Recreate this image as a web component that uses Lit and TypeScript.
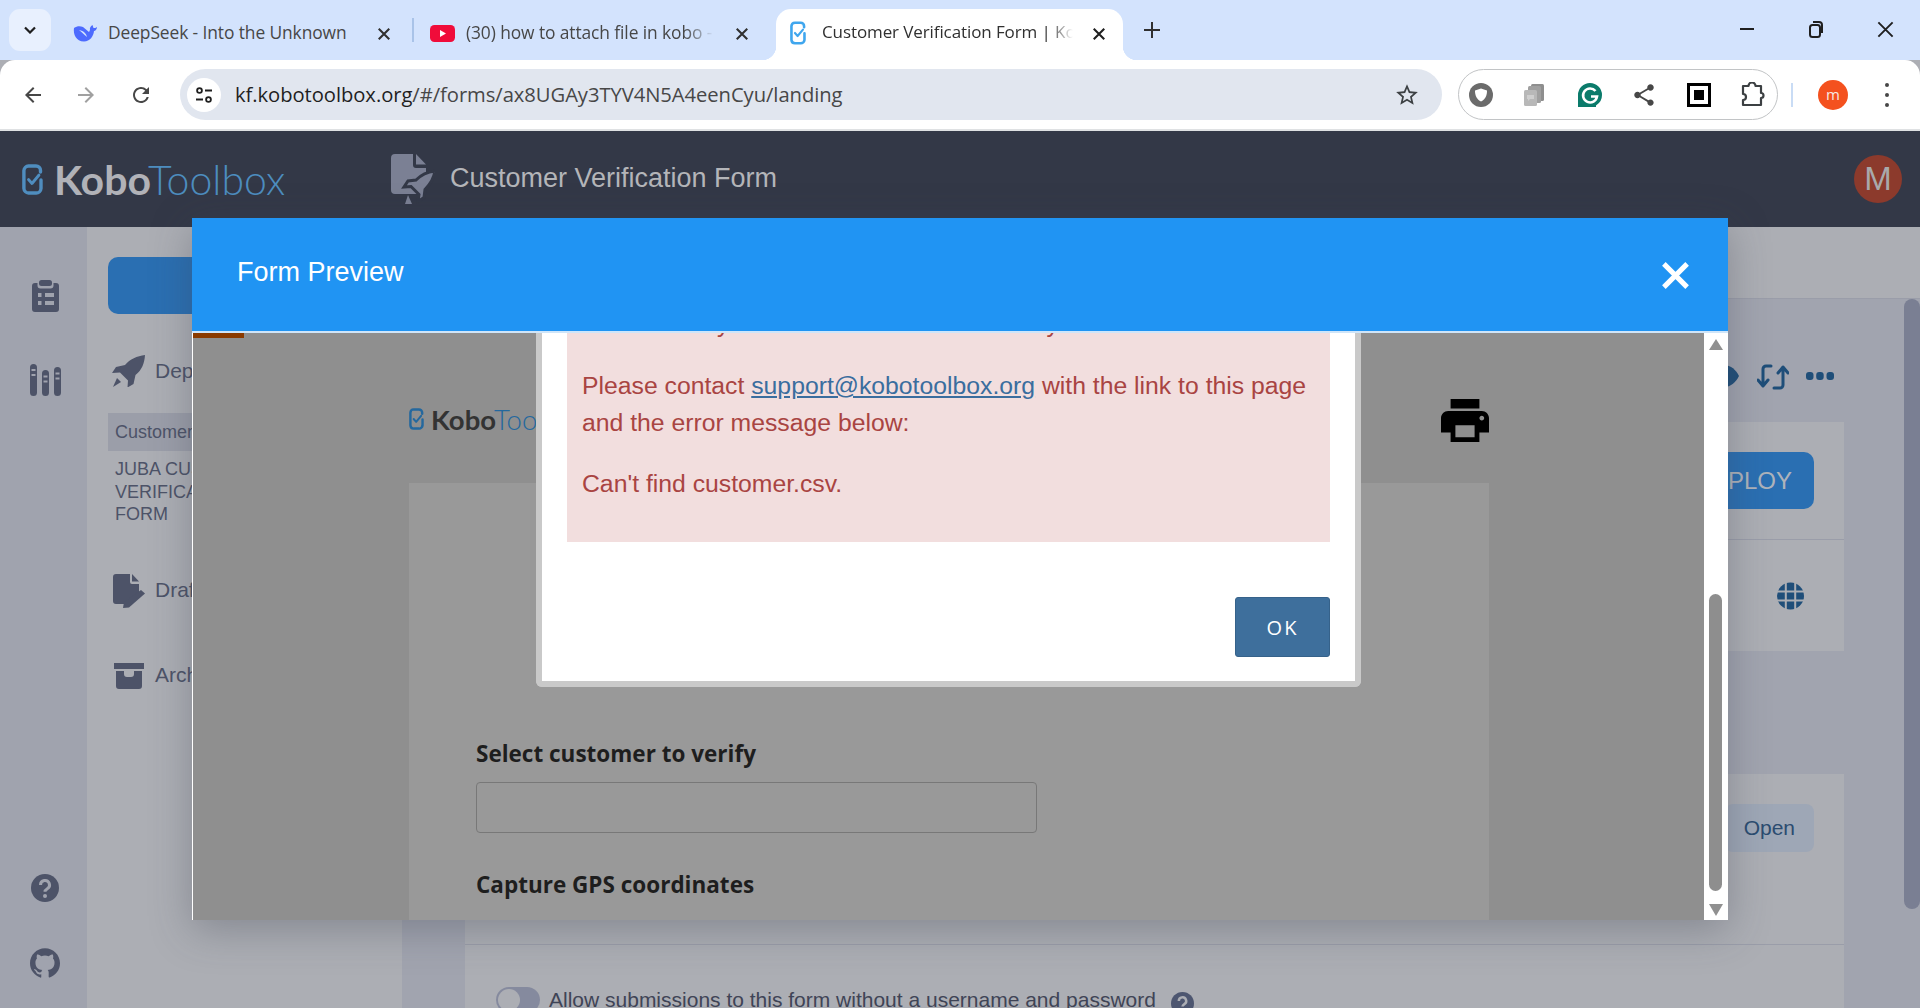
import { LitElement, html, css } from "lit";
import { customElement } from "lit/decorators.js";

const P = (d: string, vb = "0 0 24 24", cls = "") => html`<svg class=${cls} viewBox=${vb} fill="currentColor"><path d=${d} fill-rule="evenodd"></path></svg>`;

const markIcon = (cls: string) => html`<svg class=${cls} viewBox="0 0 21 31" fill="none" stroke="currentColor" stroke-width="3.400" stroke-linecap="round" stroke-linejoin="round">
  <path d="M18.500 8V6.500A4.500 4.500 0 0 0 14 2H6.500A4.800 4.800 0 0 0 1.900 6.500v18A4.800 4.800 0 0 0 6.500 29H14a4.800 4.800 0 0 0 5-4.500V16"></path>
  <path d="M6.500 15.500l3.500 4 7-8.500" stroke-width="2.800"></path></svg>`;

const logo = (cls: string) => html`<div class="logo ${cls}">${markIcon("mark")}<span class="kobo">Kobo</span><span class="tool">Toolbox</span></div>`;

const xIcon = (cls: string, w = 2.4) => html`<svg class=${cls} viewBox="0 0 16 16" fill="none" stroke="currentColor" stroke-width=${w}><path d="M2 2l12 12M14 2L2 14"></path></svg>`;

@customElement("app-root")
export class AppRoot extends LitElement {
  static styles = css`
    :host { display: block; width: 1920px; height: 1008px; overflow: hidden; position: relative; font-family: "Liberation Sans", Arial, sans-serif; background: #acaeb4; }
    * { box-sizing: border-box; }
    svg { display: block; flex: none; }

    /* tab strip */
    .strip { height: 60px; background: #d3e3fd; display: flex; align-items: flex-start; font-family: "Open Sans", "Noto Sans", sans-serif; color: #474747; }
    .expander { width: 42px; height: 42px; margin: 9px 0 0 9px; border-radius: 11px; background: #e8f0fe; display: flex; align-items: center; justify-content: center; color: #1f1f1f; }
    .expander svg { width: 12px; height: 8px; }
    .tab { height: 51px; margin-top: 9px; display: flex; align-items: center; position: relative; font-size: 17.4px; letter-spacing: -0.1px; }
    .tab .title { flex: 1; white-space: nowrap; overflow: hidden; min-width: 0; margin-top: -6px; }
    .tab .close { width: 14px; height: 14px; color: #303030; flex: none; margin-top: -1px; }
    .tab1 { width: 361px; padding-left: 22px; }
    .tab1 .fav { width: 24px; height: 17px; margin-right: 11px; margin-top: -3px; }
    .tab1 .close { margin: -1px 21px 0 19px; }
    .sep { width: 2px; height: 24px; background: #a9c3e8; margin-top: 18px; }
    .tab2 { width: 362px; padding-left: 16px; }
    .tab2 .fav { width: 25px; height: 17px; margin-right: 11px; margin-top: -2px; }
    .tab2 .title { -webkit-mask-image: linear-gradient(90deg, #000 88%, transparent 100%); mask-image: linear-gradient(90deg, #000 88%, transparent 100%); }
    .tab2 .close { margin: -1px 27px 0 21px; }
    .tab3 { width: 347px; padding-left: 14px; background: #fff; border-radius: 15px 15px 0 0; color: #303030; font-size: 17px; }
    .tab3::before, .tab3::after { content: ""; position: absolute; bottom: 0; width: 14px; height: 14px; }
    .tab3::before { left: -14px; background: radial-gradient(circle at 0 0, transparent 14px, #fff 14.5px); }
    .tab3::after { right: -14px; background: radial-gradient(circle at 100% 0, transparent 14px, #fff 14.5px); }
    .tab3 .fav { width: 16px; height: 24px; margin-right: 16px; margin-top: -3px; color: #3fa6ee; }
    .tab3 .title { -webkit-mask-image: linear-gradient(90deg, #000 90%, transparent 100%); mask-image: linear-gradient(90deg, #000 90%, transparent 100%); }
    .tab3 .close { margin: -1px 17px 0 19px; color: #1f1f1f; }
    .plus { width: 20px; height: 20px; margin: 20px 0 0 19px; color: #303030; }
    .win { margin-left: auto; display: flex; height: 58px; color: #1f1f1f; }
    .win div { width: 69px; display: flex; align-items: center; justify-content: center; }
    .win div:last-child { width: 70px; }
    .win .x { width: 19px; height: 19px; }
    .win .min { width: 14px; height: 2px; background: #1f1f1f; }
    .win .rest { width: 16px; height: 18px; }

    /* toolbar */
    .toolbar { height: 69px; padding: 9px 0 9px 6px; background: #fff; border-radius: 15px 15px 0 0; display: flex; align-items: center; color: #474747; }
    .nav { height: 51px; display: flex; align-items: center; justify-content: center; }
    .nav svg { width: 24px; height: 24px; }
    .w53 { width: 53px; } .w57 { width: 57px; }
    .nav.off { color: #a0a0a0; }
    .omni { width: 1262px; height: 51px; margin-left: 11px; background: #e1e6ef; border-radius: 26px; display: flex; align-items: center; padding-left: 7px; font-family: "Open Sans", "Noto Sans", sans-serif; }
    .tune { width: 34px; height: 34px; border-radius: 50%; background: #fff; display: flex; align-items: center; justify-content: center; color: #1f1f1f; }
    .tune svg { width: 20px; height: 20px; }
    .url { margin-left: 14px; font-size: 20.2px; letter-spacing: -0.05px; color: #1f1f1f; white-space: nowrap; margin-top: -2px; }
    .url span { color: #474747; }
    .star { margin-left: auto; margin-right: 22px; width: 26px; height: 26px; color: #3c4043; }
    .pill { width: 320px; height: 51px; margin-left: 16px; border: 1px solid #c2c4c6; border-radius: 26px; display: flex; align-items: center; padding-left: 9px; gap: 28.4px; }
    .pill svg { width: 26px; height: 26px; }
    .share { color: #474747; }
    .tsep { width: 2px; height: 24px; background: #c9dcf5; margin-left: 13px; }
    .avatar { width: 30px; height: 30px; border-radius: 50%; background: #f4511e; color: #f6e9e2; margin-left: 25px; display: flex; align-items: center; justify-content: center; font: 15px "Open Sans", sans-serif; padding-bottom: 2px; }
    .kebab { margin-left: 37px; display: flex; flex-direction: column; gap: 6px; }
    .kebab i { width: 4px; height: 4px; border-radius: 50%; background: #474747; display: block; }
    .tline { height: 2px; background: #dfe1e3; }

    /* kobo header */
    .khead { height: 96px; background: #333847; display: flex; align-items: center; position: relative; }
    .logo { display: flex; align-items: center; }
    .logo .kobo, .logo .tool { font-family: Lato, sans-serif; white-space: nowrap; }
    .big { width: 369px; margin-left: 22px; }
    .big .mark { width: 21px; height: 31px; color: #4f8dbf; margin-right: 11px; }
    .big .kobo { font-size: 41px; font-weight: 700; color: #b1b2b8; }
    .big .tool { font-size: 41px; font-weight: 300; color: #4d8dbf; margin-left: -3px; }
    .formicon { width: 44px; height: 50px; color: #7b8094; margin-right: 15px; }
    .ktitle { font-size: 27px; color: #b4b5b9; margin-top: -1px; }
    .kav { margin-left: auto; margin-right: 18px; width: 48px; height: 48px; border-radius: 50%; background: #8c3a2c; color: #a9a9ab; display: flex; align-items: center; justify-content: center; font-size: 33px; }

    /* page body */
    .pbody { height: 781px; display: flex; color: #4d5368; overflow: hidden; }
    .rail { width: 87px; background: #a0a3ae; display: flex; flex-direction: column; align-items: center; padding: 53px 0 30px 3px; }
    .rail .i1 { width: 27px; height: 32px; }
    .rail .i2 { width: 31px; height: 32px; margin-top: 52px; }
    .rail .i3 { width: 28px; height: 28px; margin-top: auto; }
    .rail .i4 { width: 30px; height: 30px; margin-top: 46px; }
    .side { width: 315px; background: #acaeb4; padding: 30px 0 0 21px; position: relative; }
    .newbtn { width: 270px; height: 57px; background: #2a6fb2; border-radius: 10px; }
    .srow { display: flex; align-items: center; padding-left: 4px; font-size: 21px; }
    .srow .lab { position: absolute; left: 68px; }
    .srow svg { color: #4d5368; }
    .r1 { margin-top: 41px; height: 32px; } .r1 svg { width: 33px; height: 32px; }
    .sel { margin-top: 26px; height: 38px; width: 270px; background: #9b9ea9; padding-left: 7px; display: flex; align-items: center; font-size: 18px; }
    .sub { margin: 7px 0 0 7px; font-size: 18px; line-height: 22.5px; }
    .r2 { margin-top: 48px; height: 34px; padding-left: 5px; } .r2 svg { width: 32px; height: 34px; }
    .r2 .lab, .r3 .lab { margin-top: -2px; }
    .r3 { margin-top: 55px; height: 26px; padding-left: 6px; } .r3 svg { width: 30px; height: 26px; }

    .mainc { flex: 1; min-width: 0; display: flex; flex-direction: column; }
    .band { height: 72px; border-bottom: 1px solid #9a9da9; flex: none; background: #acaeb4; }
    .mrow { flex: 1; display: flex; min-height: 0; background: #a1a4af; }
    .content { flex: 1; padding: 0 60px 0 63px; min-width: 0; }
    .pbar { width: 16px; height: 610px; background: #7a7f93; border-radius: 8px; flex: none; }
    .acts { height: 46px; margin-top: 54px; display: flex; justify-content: flex-end; align-items: center; gap: 18px; padding-right: 10px; color: #1f4e79; }
    .acts .eye { width: 30px; height: 22px; }
    .acts .sync { width: 32px; height: 27px; margin-right: -1px; }
    .acts .dots { width: 28px; height: 8px; }
    .card { background: #acaeb4; }
    .c1 { margin-top: 23px; height: 229px; }
    .c1a { height: 118px; border-bottom: 1px solid #9a9da9; display: flex; justify-content: flex-end; padding: 30px 30px 0 0; }
    .deploy { height: 57px; padding: 0 22px; border-radius: 10px; background: #2a6fb2; color: #aeb3bb; font-size: 24px; display: flex; align-items: center; }
    .c1b { height: 111px; display: flex; justify-content: flex-end; align-items: center; padding-right: 40px; color: #1f4e79; }
    .c1b svg { width: 27px; height: 28px; }
    .c2 { margin-top: 123px; height: 171px; border-bottom: 1px solid #9a9da9; display: flex; justify-content: flex-end; padding: 30px 30px 0 0; }
    .open { height: 48px; padding: 0 19px; border-radius: 8px; background: #9ea7b6; color: #2b4c70; font-size: 21px; display: flex; align-items: center; }
    .c3 { height: 70px; padding: 42px 0 0 31px; display: flex; align-items: flex-start; font-size: 21px; color: #3f4456; white-space: nowrap; }
    .toggle { width: 44px; height: 26px; border-radius: 13px; background: #858a9e; margin-right: 9px; position: relative; flex: none; }
    .toggle::before { content: ""; position: absolute; left: 2px; top: 2px; width: 22px; height: 22px; border-radius: 50%; background: #acaeb4; }
    .c3 .help { width: 23px; height: 23px; margin: 5px 0 0 15px; color: #4d5670; }
    .c3 .allow { margin-top: 1px; }

    /* modal */
    .modal { position: absolute; left: 192px; top: 218px; width: 1536px; height: 702px; display: flex; flex-direction: column; box-shadow: 0 10px 40px rgba(60,65,80,.35); background: #fff; border-radius: 3px 3px 0 0; }
    .mhead { height: 113px; flex: none; background: #2094f3; color: #fff; display: flex; align-items: center; justify-content: space-between; padding: 0 37px 5px 45px; font-size: 27px; }
    .mx { width: 31px; height: 31px; margin-top: 6px; }
    .mline { height: 2px; background: #cfe5f9; flex: none; }
    .mbody { flex: 1; display: flex; min-height: 0; padding-left: 1px; }
    .frame { width: 1511px; flex: none; background: #8f8f8f; position: relative; overflow: hidden; }
    .brown { position: absolute; left: 0; top: 0; width: 51px; height: 5px; background: #8a3a00; }
    .fhead { height: 150px; display: flex; justify-content: space-between; margin: 0 215px 0 216px; padding-top: 64px; }
    .small { height: 44px; }
    .small .mark { width: 15px; height: 22px; color: #24689e; margin-right: 7px; }
    .small .kobo { font-size: 27.5px; font-weight: 700; color: #333; }
    .small .tool { font-size: 27.5px; font-weight: 300; color: #24689e; margin-left: -2px; }
    .printer { width: 48px; height: 45px; color: #000; margin-top: 1px; }
    .sheet { height: 437px; margin: 0 215px 0 216px; background: #999; padding: 256px 0 0 67px; font-family: "Open Sans", "Noto Sans", sans-serif; color: #1e1e1e; }
    .q { font-size: 22.5px; font-weight: 700; line-height: 30px; }
    .inp { width: 561px; height: 51px; border: 1px solid #787878; border-radius: 4px; margin: 13px 0 37px; }
    .dialog { position: absolute; left: 343px; bottom: 233px; width: 825px; background: #fff; border: 6px solid #c9c9c9; border-top: 0; border-radius: 0 0 6px 6px; padding: 0 25px 24px 25px; }
    .alert { background: #f2dede; color: #a94442; padding: 0 15px 16px; font-size: 24.75px; line-height: 37px; }
    .alert p { margin: 0 0 24px; }
    .alert .tails { display: flex; padding-left: 135px; gap: 317px; height: 37px; margin-bottom: 25px; }
    .alert a { color: #3a6d9e; text-decoration: underline; }
    .okrow { display: flex; justify-content: flex-end; margin-top: 55px; }
    .ok { width: 95px; height: 60px; background: #3e6f9c; border: 1px solid #36628a; border-radius: 3px; color: #fff; font: 20px "Open Sans", sans-serif; letter-spacing: 2px; display: flex; align-items: center; justify-content: center; }
    .msb { flex: 1; background: #fff; position: relative; }
    .up, .down { position: absolute; left: 5px; width: 0; height: 0; border-left: 7px solid transparent; border-right: 7px solid transparent; }
    .up { top: 6px; border-bottom: 11px solid #909090; }
    .down { bottom: 4px; border-top: 12px solid #909090; }
    .thumb { position: absolute; left: 5px; top: 261px; width: 13px; height: 297px; background: #8e8e8e; border-radius: 7px; }
  `;

  render() {
    return html`
      <div class="strip">
        <div class="expander"><svg viewBox="0 0 12 8" fill="none" stroke="currentColor" stroke-width="2.200"><path d="M1 1.500l5 5 5-5"></path></svg></div>
        <div class="tab tab1">
          <svg class="fav" viewBox="0 0 24 17"><path fill="#4d6bfe" fill-rule="evenodd" d="M1 3C0 9 3 16.500 11 16.500c6 0 9.500-5.500 10-10.500 1.500 0 3-2 3-4-1 1-2.500 1-3.500 1L19.500 0c-2 1-3 3-2.500 5-.5 1-.5 1-1 2L10 2C7 1 4 1 1 3zM6 5c3 2 5 5 8 7-.5-3-3-6-8-7z"></path></svg>
          <span class="title">DeepSeek - Into the Unknown</span>
          ${xIcon("close")}
        </div>
        <div class="sep"></div>
        <div class="tab tab2">
          <svg class="fav" viewBox="0 0 25 17"><rect width="25" height="17" rx="4.500" fill="#f00c3a"></rect><path d="M10 5l6 3.500-6 3.500z" fill="#fff"></path></svg>
          <span class="title">(30) how to attach file in kobo - YouTube</span>
          ${xIcon("close")}
        </div>
        <div class="tab tab3">
          ${markIcon("fav")}
          <span class="title">Customer Verification Form | KoboToolbox</span>
          ${xIcon("close")}
        </div>
        <svg class="plus" viewBox="0 0 20 20" fill="none" stroke="currentColor" stroke-width="2"><path d="M10 2v16M2 10h16"></path></svg>
        <div class="win">
          <div><span class="min"></span></div>
          <div><svg class="rest" viewBox="0 0 16 18" fill="none" stroke="currentColor" stroke-width="2"><rect x="2" y="5" width="10" height="12" rx="2.500"></rect><path d="M5 2h6a3 3 0 0 1 3 3v8"></path></svg></div>
          <div>${xIcon("x", 1.6)}</div>
        </div>
      </div>

      <div class="toolbar">
        <div class="nav w53">${P("M20 11H7.830l5.590-5.590L12 4l-8 8 8 8 1.410-1.410L7.830 13H20v-2z")}</div>
        <div class="nav w53 off">${P("M4 11h12.170l-5.590-5.590L12 4l8 8-8 8-1.410-1.410L16.170 13H4v-2z")}</div>
        <div class="nav w57">${P("M17.650 6.350A7.958 7.958 0 0 0 12 4c-4.420 0-7.990 3.580-7.990 8s3.570 8 7.990 8c3.730 0 6.840-2.550 7.730-6h-2.080A5.990 5.990 0 0 1 12 18c-3.310 0-6-2.690-6-6s2.690-6 6-6c1.660 0 3.140.690 4.220 1.780L13 11h7V4l-2.350 2.350z")}</div>
        <div class="omni">
          <div class="tune"><svg viewBox="0 0 20 20" fill="none" stroke="currentColor" stroke-width="1.800"><circle cx="5.500" cy="5.500" r="2.400"></circle><path d="M11 5.500h7M2 14.500h7"></path><circle cx="14.500" cy="14.500" r="2.400"></circle></svg></div>
          <div class="url">kf.kobotoolbox.org<span>/#/forms/ax8UGAy3TYV4N5A4eenCyu/landing</span></div>
          ${P("M22 9.240l-7.190-.620L12 2 9.190 8.630 2 9.240l5.460 4.730L5.820 21 12 17.270 18.180 21l-1.630-7.030L22 9.240zM12 15.400l-3.760 2.270 1-4.280-3.320-2.880 4.380-.380L12 6.100l1.710 4.040 4.380.380-3.320 2.880 1 4.280L12 15.400z", "0 0 24 24", "star")}
        </div>
        <div class="pill">
          <svg viewBox="0 0 26 26"><circle cx="13" cy="13" r="12" fill="#6b6b6b"></circle><path d="M13 6.500l6 2c.2 5-2 9-6 11-4-2-6.200-6-6-11z" fill="#fff"></path></svg>
          <svg viewBox="0 0 26 26"><rect x="9" y="2" width="13" height="17" rx="1.500" fill="#8e8e8e"></rect><rect x="6" y="4" width="13" height="17" rx="1.500" fill="#a0a0a0"></rect><rect x="2" y="8" width="13" height="16" rx="1.500" fill="#b8b8b8"></rect><path d="M5 13h7v4H8l-2 2v-2H5z" fill="#cfcfcf"></path></svg>
          <svg viewBox="0 0 26 26"><path d="M13 1a12 12 0 0 1 12 12 12 12 0 0 1-6 10.400V25H1v-12A12 12 0 0 1 13 1z" fill="#0b7b6b"></path><path d="M18.500 9A7 7 0 1 0 20 14.500h-6" fill="none" stroke="#fff" stroke-width="2.600"></path></svg>
          ${P("M18 16.080c-.760 0-1.440.300-1.960.770L8.910 12.700c.050-.230.090-.460.090-.700s-.040-.470-.090-.700l7.050-4.110c.540.500 1.250.810 2.040.810 1.660 0 3-1.340 3-3s-1.340-3-3-3-3 1.340-3 3c0 .240.040.470.090.700L8.040 9.810C7.500 9.310 6.790 9 6 9c-1.660 0-3 1.340-3 3s1.340 3 3 3c.790 0 1.500-.310 2.040-.810l7.120 4.160c-.050.210-.080.430-.080.650 0 1.610 1.310 2.920 2.920 2.920s2.920-1.310 2.920-2.920-1.310-2.920-2.920-2.920z", "0 0 24 24", "share")}
          <svg viewBox="0 0 26 26"><rect x="1" y="1" width="24" height="24" fill="#000"></rect><rect x="4" y="4" width="18" height="18" fill="#fff"></rect><rect x="8" y="8" width="10" height="10" fill="#000"></rect></svg>
          <svg viewBox="0 0 26 26" fill="none" stroke="#3c4043" stroke-width="2.200" stroke-linejoin="round"><path d="M3 5h5.500a3.500 3.500 0 0 1 7 0H21v7a2.500 2.500 0 0 1 0 5v7H3v-5a3 3 0 0 0 0-6z" transform="translate(0 -1)"></path></svg>
        </div>
        <div class="tsep"></div>
        <div class="avatar">m</div>
        <div class="kebab"><i></i><i></i><i></i></div>
      </div>
      <div class="tline"></div>

      <div class="khead">
        ${logo("big")}
        <svg class="formicon" viewBox="0 0 44 50"><path fill="currentColor" d="M4 0h18v11a3 3 0 0 0 3 3h10v26H4a4 4 0 0 1-4-4V4a4 4 0 0 1 4-4z"></path><path fill="currentColor" d="M25 0l10 10.500H25z"></path><path fill="currentColor" stroke="#333847" stroke-width="3" d="M44 17c-8 1-14 4-19 9l-8 1-4 6 7-.5 8 8-1 7 6-4 1-8c5-5 9-11 10-19z"></path><path fill="currentColor" d="M17 41l-3 9h7z"></path></svg>
        <div class="ktitle">Customer Verification Form</div>
        <div class="kav">M</div>
      </div>

      <div class="pbody">
        <div class="rail">
          <svg class="i1" viewBox="0 0 27 32" fill="currentColor"><rect x="7" y="0" width="13" height="6" rx="2.500"></rect><path fill-rule="evenodd" d="M3 3h2.500v2.500a3 3 0 0 0 3 3h10a3 3 0 0 0 3-3V3H24a3 3 0 0 1 3 3v23a3 3 0 0 1-3 3H3a3 3 0 0 1-3-3V6a3 3 0 0 1 3-3zM6 13v4h3.500v-4zm7 0v4h9v-4zM6 21v4h3.500v-4zm7 0v4h9v-4z"></path></svg>
          <svg class="i2" viewBox="0 0 31 32" fill="currentColor" fill-rule="evenodd"><path d="M3.500 0A3.500 3.500 0 0 1 7 3.500V28.500a3.500 3.500 0 0 1-7 0V3.500A3.500 3.500 0 0 1 3.500 0zM1.500 5v2h4V5zM1.500 10v2h4v-2z"></path><path d="M15.500 6A3.500 3.500 0 0 1 19 9.500v19a3.500 3.500 0 0 1-7 0v-19A3.500 3.500 0 0 1 15.500 6zM13.500 11.500v2h4v-2zM13.500 16.500v2h4v-2z"></path><path d="M27.500 3A3.500 3.500 0 0 1 31 6.500v22a3.500 3.500 0 0 1-7 0v-22A3.500 3.500 0 0 1 27.500 3zM25.500 8.500v2h4v-2zM25.500 13.500v2h4v-2z"></path></svg>
          <svg class="i3" viewBox="0 0 28 28"><circle cx="14" cy="14" r="14" fill="currentColor"></circle><path d="M9.500 11a4.500 4.500 0 1 1 6.800 3.800c-1.400.9-2.300 1.500-2.300 3" fill="none" stroke="#a0a3ae" stroke-width="3"></path><circle cx="14" cy="22" r="2" fill="#a0a3ae"></circle></svg>
          ${P("M12 .297c-6.630 0-12 5.373-12 12 0 5.303 3.438 9.800 8.205 11.385.600.113.820-.258.820-.577 0-.285-.010-1.040-.015-2.040-3.338.724-4.042-1.610-4.042-1.610C4.422 18.070 3.633 17.700 3.633 17.700c-1.087-.744.084-.729.084-.729 1.205.084 1.838 1.236 1.838 1.236 1.070 1.835 2.809 1.305 3.495.998.108-.776.417-1.305.760-1.605-2.665-.300-5.466-1.332-5.466-5.930 0-1.310.465-2.380 1.235-3.220-.135-.303-.540-1.523.105-3.176 0 0 1.005-.322 3.300 1.230.960-.267 1.980-.399 3-.405 1.020.006 2.040.138 3 .405 2.280-1.552 3.285-1.230 3.285-1.230.645 1.653.240 2.873.120 3.176.765.840 1.230 1.910 1.230 3.220 0 4.610-2.805 5.625-5.475 5.920.420.360.810 1.096.810 2.220 0 1.606-.015 2.896-.015 3.286 0 .315.210.690.825.570C20.565 22.092 24 17.592 24 12.297c0-6.627-5.373-12-12-12", "0 0 24 24", "i4")}
        </div>
        <div class="side">
          <div class="newbtn"></div>
          <div class="srow r1">
            <svg viewBox="0 0 33 32" fill="currentColor"><path d="M33 0c-8 1-15 4-20 10L4 12l-4 6 8-.5 8 8-.5 7 6-3.500 2-9C30 15 32.500 8 33 0z"></path><path d="M5 23l4 4-8 5z"></path></svg>
            <span class="lab">Deployed</span>
          </div>
          <div class="sel">Customer Verification</div>
          <div class="sub">JUBA CUSTOMER<br />VERIFICATION<br />FORM</div>
          <div class="srow r2">
            <svg viewBox="0 0 32 34" fill="currentColor"><path d="M3 0h14v8a2 2 0 0 0 2 2h7v9L14 30H3a3 3 0 0 1-3-3V3a3 3 0 0 1 3-3z"></path><path d="M19 0l7 7.500h-7z"></path><path d="M28 16l4 3.500-16 14-6 .5 1-6z"></path></svg>
            <span class="lab">Drafts</span>
          </div>
          <div class="srow r3">
            <svg viewBox="0 0 30 26" fill="currentColor" fill-rule="evenodd"><rect width="30" height="6"></rect><path d="M2 8h26v15a3 3 0 0 1-3 3H5a3 3 0 0 1-3-3zM10 8v3a3 3 0 0 0 3 3h4a3 3 0 0 0 3-3V8z"></path></svg>
            <span class="lab">Archived</span>
          </div>
        </div>
        <div class="mainc">
          <div class="band"></div>
          <div class="mrow">
            <div class="content">
              <div class="acts">
                <svg class="eye" viewBox="0 0 30 22" fill="currentColor"><path d="M15 0c7 0 12 5 15 11-3 6-8 11-15 11S3 17 0 11C3 5 8 0 15 0z"></path></svg>
                <svg class="sync" viewBox="0 0 32 27" fill="none" stroke="currentColor" stroke-width="3" stroke-linecap="round" stroke-linejoin="round"><path d="M1 17l5 6 5-6M6 22V6a3 3 0 0 1 3-3h5"></path><path d="M21 10l5-6 5 6M26 5v17a3 3 0 0 1-3 3h-6"></path></svg>
                <svg class="dots" viewBox="0 0 28 8" fill="currentColor"><rect width="7.500" height="8" rx="3"></rect><rect x="10.200" width="7.500" height="8" rx="3"></rect><rect x="20.500" width="7.500" height="8" rx="3"></rect></svg>
              </div>
              <div class="card c1">
                <div class="c1a"><div class="deploy">DEPLOY</div></div>
                <div class="c1b"><svg viewBox="0 0 27 28"><circle cx="13.500" cy="14" r="13.500" fill="currentColor"></circle><path d="M0 9.500h27M0 18.500h27M8.800 0v28M18.200 0v28" stroke="#acaeb4" stroke-width="2"></path></svg></div>
              </div>
              <div class="card c2"><div class="open">Open</div></div>
              <div class="card c3">
                <span class="toggle"></span>
                <span class="allow">Allow submissions to this form without a username and password</span>
                <svg class="help" viewBox="0 0 28 28"><circle cx="14" cy="14" r="14" fill="currentColor"></circle><path d="M9.500 11a4.500 4.500 0 1 1 6.800 3.800c-1.400.9-2.300 1.500-2.300 3" fill="none" stroke="#acaeb4" stroke-width="3"></path></svg>
              </div>
            </div>
            <div class="pbar"></div>
          </div>
        </div>
      </div>

      <div class="modal">
        <div class="mhead"><span>Form Preview</span>${xIcon("mx", 2.6)}</div>
        <div class="mline"></div>
        <div class="mbody">
          <div class="frame">
            <div class="brown"></div>
            <div class="fhead">
              ${logo("small")}
              ${P("M19 8H5c-1.660 0-3 1.340-3 3v6h4v4h12v-4h4v-6c0-1.660-1.340-3-3-3zm-3 11H8v-5h8v5zm3-7c-.550 0-1-.450-1-1s.450-1 1-1 1 .450 1 1-.450 1-1 1zm-1-9H6v4h12V3z", "2 3 20 18", "printer")}
            </div>
            <div class="sheet">
              <div class="q">Select customer to verify</div>
              <div class="inp"></div>
              <div class="q">Capture GPS coordinates</div>
            </div>
            <div class="dialog">
              <div class="alert">
                <p class="tails"><span>y</span><span>y</span></p>
                <p>Please contact <a>support@kobotoolbox.org</a> with the link to this page and the error message below:</p>
                <p>Can't find customer.csv.</p>
              </div>
              <div class="okrow"><div class="ok">OK</div></div>
            </div>
          </div>
          <div class="msb"><div class="up"></div><div class="thumb"></div><div class="down"></div></div>
        </div>
      </div>
    `;
  }
}
